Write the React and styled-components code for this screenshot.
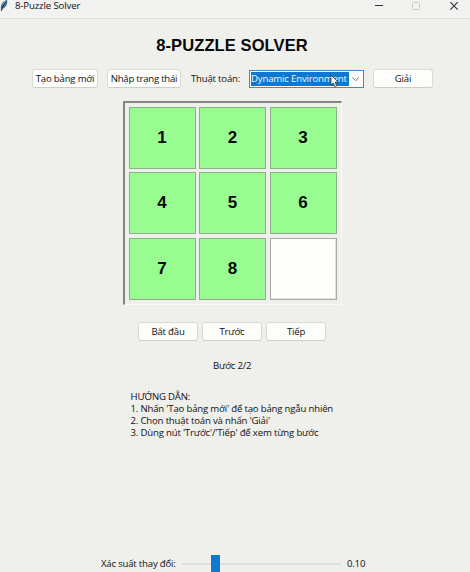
import React from "react";
import styled, { createGlobalStyle } from "styled-components";

const GlobalStyle = createGlobalStyle`
  * { box-sizing: border-box; }
  body { margin: 0; background: #efefec; overflow: hidden; }
`;

const Window = styled.div`
  width: 470px;
  height: 572px;
  overflow: hidden;
  display: flex;
  flex-direction: column;
  background: #efefec;
  color: #111;
  font-family: "Open Sans", "Noto Sans", sans-serif;
  font-size: 9.6px;
  line-height: 12px;
  letter-spacing: -0.2px;
  white-space: nowrap;

  & > * {
    flex: none;
  }
`;

const TitleBar = styled.header`
  height: 19px;
  display: flex;
  align-items: flex-start;
  background: #f2f2f0;
  border-bottom: 1px solid #dfe0dc;
`;

const Feather = styled.svg`
  width: 10px;
  height: 12px;
  flex: none;
`;

const Caption = styled.span`
  margin-left: 5px;
  letter-spacing: -0.12px;
`;

const WindowControls = styled.svg`
  width: 100px;
  height: 14px;
  margin-left: auto;
`;

const Heading = styled.h1`
  margin: 16px 0 0;
  padding-right: 6px;
  height: 20px;
  text-align: center;
  font: bold 16.5px/20px "Liberation Sans", Arial, sans-serif;
  letter-spacing: 0.1px;
  color: #080808;
`;

const Toolbar = styled.div`
  display: flex;
  align-items: center;
  height: 19px;
  margin: 14px 0 0 32px;
`;

const Button = styled.button`
  width: ${(p) => p.$width}px;
  height: 19px;
  flex: none;
  margin-right: ${(p) => p.$gap || 0}px;
  padding: 0;
  display: flex;
  align-items: center;
  justify-content: center;
  background: #fdfdfb;
  border: 1px solid #dadad6;
  border-bottom-color: #cdcdc9;
  border-radius: 3px;
  color: inherit;
  font: inherit;
  letter-spacing: ${(p) => p.$track || "-0.2px"};
`;

const FieldLabel = styled.label`
  width: 49px;
  margin: 0 9px 0 10px;
`;

const Combo = styled.div`
  position: relative;
  width: 115px;
  height: 18px;
  margin-right: 9px;
  padding: 1px;
  display: flex;
  background: #fdfdfb;
  border: 1px solid #3c8dd0;
`;

const Selection = styled.span`
  width: 98px;
  height: 14px;
  line-height: 14px;
  letter-spacing: -0.17px;
  background: #0f77cd;
  color: #eef7ff;
`;

const Chevron = styled.svg`
  width: 13px;
  height: 14px;
`;

const Pointer = styled.svg`
  position: absolute;
  left: 80px;
  top: 3px;
  width: 9px;
  height: 14px;
`;

const Board = styled.main`
  width: 219px;
  height: 204px;
  margin: 13px 0 0 123px;
  padding: 4px 3px 3px 3.5px;
  display: grid;
  grid-template-columns: repeat(3, 67px);
  grid-template-rows: repeat(3, 62px);
  column-gap: 3.5px;
  row-gap: 3.4px;
  border: 1px solid;
  border-width: 2px 1px 1px 2px;
  border-color: #858583 #f8f8f6 #f8f8f6 #858583;
`;

const Tile = styled.div`
  display: flex;
  align-items: center;
  justify-content: center;
  background: ${(p) => (p.$empty ? "#fefefb" : "#98fc91")};
  border: 1px solid ${(p) => (p.$empty ? "#aaaaa8" : "#86b583")};
  box-shadow: inset -1px -1px ${(p) => (p.$empty ? "#e4e4e1" : "#aaf0a4")};
  color: #050a05;
  font: bold 17px/20px "Liberation Sans", Arial, sans-serif;
  letter-spacing: 0;
`;

const StepButtons = styled.div`
  display: flex;
  gap: 4px;
  margin: 17px 0 0 138px;
`;

const StepStatus = styled.div`
  margin: 19px 0 0 213px;
`;

const Guide = styled.section`
  margin: 19px 0 0 130.5px;
  height: 48px;
  letter-spacing: -0.18px;
`;

const SliderRow = styled.footer`
  display: flex;
  align-items: center;
  height: 20px;
  margin: 115px 0 0 101px;
`;

const SliderLabel = styled.label`
  width: 81px;
`;

const Track = styled.div`
  width: 159px;
  height: 2px;
  margin-right: 6px;
  display: flex;
  align-items: center;
  background: #dededb;
`;

const Thumb = styled.div`
  width: 9px;
  height: 18px;
  margin-left: 29px;
  background: #0f79d1;
`;

const tiles = ["1", "2", "3", "4", "5", "6", "7", "8", ""];

const guide = [
  "HƯỚNG DẪN:",
  "1. Nhấn 'Tạo bảng mới' để tạo bảng ngẫu nhiên",
  "2. Chọn thuật toán và nhấn 'Giải'",
  "3. Dùng nút 'Trước'/'Tiếp' để xem từng bước",
];

export default function App() {
  return (
    <Window>
      <GlobalStyle />
      <TitleBar>
        <Feather viewBox="0 0 10 12">
          <path d="M1 10C0 6 2 1 7 0c1 3-1 8-5 9z" fill="#3c7197" />
          <path d="M1.3 11C2.5 7 4 4 6.4 1" fill="none" stroke="#173448" strokeWidth="1" />
          <path d="M3 4.5C4 2.5 5 1.2 6 .5" stroke="#9fc5dc" strokeWidth=".8" fill="none" />
        </Feather>
        <Caption>8-Puzzle Solver</Caption>
        <WindowControls viewBox="0 0 100 14" fill="none">
          <path d="M5 5.5h8" stroke="#333" />
          <rect x="42.5" y="2.5" width="7" height="7" rx="1" stroke="#c9c9c6" />
          <path d="M80.3 2.2l7.4 7.4M87.7 2.2l-7.4 7.4" stroke="#333" strokeWidth="1.1" />
        </WindowControls>
      </TitleBar>
      <Heading>8-PUZZLE SOLVER</Heading>
      <Toolbar>
        <Button $width={66} $gap={9}>Tạo bảng mới</Button>
        <Button $width={74} $track="-0.24px">Nhập trạng thái</Button>
        <FieldLabel>Thuật toán:</FieldLabel>
        <Combo>
          <Selection>Dynamic Environment</Selection>
          <Chevron viewBox="0 0 13 14">
            <path d="M3.5 5.5l3.2 3.2 3.2-3.2" fill="none" stroke="#777" />
          </Chevron>
          <Pointer viewBox="0 0 9 14">
            <path d="M1 1v10l2.3-2 1.6 3.6 1.8-.8L5.1 8.3H8.2z" fill="#fff" stroke="#222" strokeWidth=".7" />
          </Pointer>
        </Combo>
        <Button $width={60}>Giải</Button>
      </Toolbar>
      <Board>
        {tiles.map((t, i) => (
          <Tile key={i} $empty={!t}>{t}</Tile>
        ))}
      </Board>
      <StepButtons>
        <Button $width={60}>Bắt đầu</Button>
        <Button $width={60}>Trước</Button>
        <Button $width={60}>Tiếp</Button>
      </StepButtons>
      <StepStatus>Bước 2/2</StepStatus>
      <Guide>
        {guide.map((line) => (
          <div key={line}>{line}</div>
        ))}
      </Guide>
      <SliderRow>
        <SliderLabel>Xác suất thay đổi:</SliderLabel>
        <Track><Thumb /></Track>
        <span>0.10</span>
      </SliderRow>
    </Window>
  );
}
